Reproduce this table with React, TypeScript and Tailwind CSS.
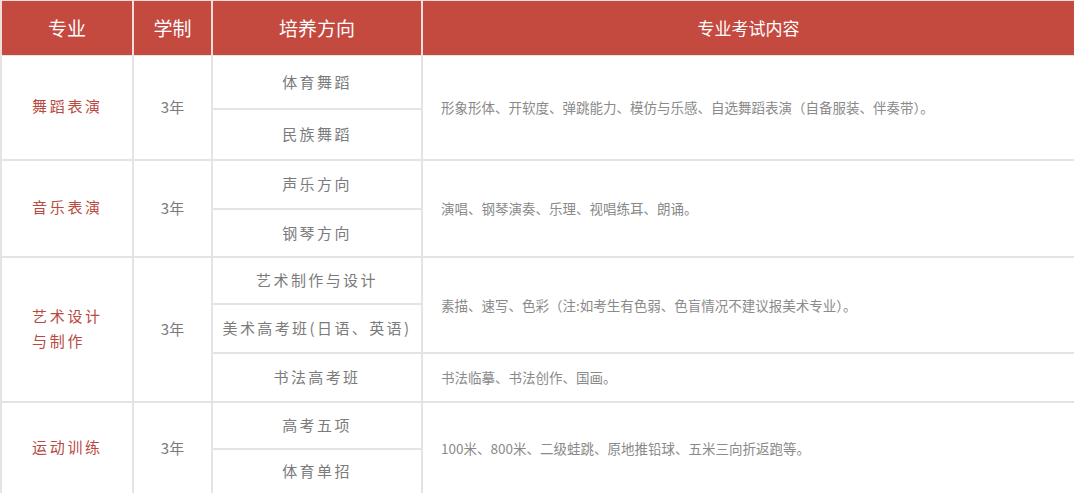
// Admission table: majors, duration, tracks and exam content.
const cjk = { fontFamily: '"Noto Sans CJK SC", "Noto Sans", sans-serif' };

const header = ["专业", "学制", "培养方向"];

type Cell = { text: string; row: string; col: string; kind: "major" | "years" | "track" | "exam" };

const cells: Cell[] = [
  { text: "舞蹈表演", row: "row-[1/3]", col: "col-[1]", kind: "major" },
  { text: "3年", row: "row-[1/3]", col: "col-[2]", kind: "years" },
  { text: "体育舞蹈", row: "row-[1]", col: "col-[3]", kind: "track" },
  { text: "民族舞蹈", row: "row-[2]", col: "col-[3]", kind: "track" },
  {
    text: "形象形体、开软度、弹跳能力、模仿与乐感、自选舞蹈表演（自备服装、伴奏带）。",
    row: "row-[1/3]",
    col: "col-[4]",
    kind: "exam",
  },
  { text: "音乐表演", row: "row-[3/5]", col: "col-[1]", kind: "major" },
  { text: "3年", row: "row-[3/5]", col: "col-[2]", kind: "years" },
  { text: "声乐方向", row: "row-[3]", col: "col-[3]", kind: "track" },
  { text: "钢琴方向", row: "row-[4]", col: "col-[3]", kind: "track" },
  { text: "演唱、钢琴演奏、乐理、视唱练耳、朗诵。", row: "row-[3/5]", col: "col-[4]", kind: "exam" },
  { text: "艺术设计\n与制作", row: "row-[5/8]", col: "col-[1]", kind: "major" },
  { text: "3年", row: "row-[5/8]", col: "col-[2]", kind: "years" },
  { text: "艺术制作与设计", row: "row-[5]", col: "col-[3]", kind: "track" },
  { text: "美术高考班(日语、英语)", row: "row-[6]", col: "col-[3]", kind: "track" },
  { text: "书法高考班", row: "row-[7]", col: "col-[3]", kind: "track" },
  {
    text: "素描、速写、色彩（注:如考生有色弱、色盲情况不建议报美术专业）。",
    row: "row-[5/7]",
    col: "col-[4]",
    kind: "exam",
  },
  { text: "书法临摹、书法创作、国画。", row: "row-[7]", col: "col-[4]", kind: "exam" },
  { text: "运动训练", row: "row-[8/10]", col: "col-[1]", kind: "major" },
  { text: "3年", row: "row-[8/10]", col: "col-[2]", kind: "years" },
  { text: "高考五项", row: "row-[8]", col: "col-[3]", kind: "track" },
  { text: "体育单招", row: "row-[9]", col: "col-[3]", kind: "track" },
  {
    text: "100米、800米、二级蛙跳、原地推铅球、五米三向折返跑等。",
    row: "row-[8/10]",
    col: "col-[4]",
    kind: "exam",
  },
];

function BodyCell({ c }: { c: Cell }) {
  if (c.kind === "exam") {
    return (
      <div className={`${c.row} ${c.col} flex items-center bg-white pl-[18px] text-[13.5px] text-[#8a8a8a]`}>
        {c.text}
      </div>
    );
  }
  if (c.kind === "major") {
    return (
      <div className={`${c.row} ${c.col} flex items-center justify-center bg-white pb-[4px]`}>
        <span className="w-[70px] whitespace-pre text-[15px] leading-[25px] tracking-[2.7px] text-[#b94a42]">
          {c.text}
        </span>
      </div>
    );
  }
  return (
    <div
      className={`${c.row} ${c.col} flex items-center justify-center bg-white text-[15px] text-[#7b7b7b] ${
        c.kind === "track" ? "tracking-[2.4px]" : ""
      }`}
    >
      {c.text}
    </div>
  );
}

export default function App() {
  return (
    <div className="h-[493px] w-[1074px] overflow-hidden bg-[#e4e4e4]" style={cjk}>
      <div className="grid h-[55px] grid-cols-[130px_77px_208px_1fr] gap-x-[2px] bg-[#f3dedc] pl-[2px] pt-[1px]">
        {header.map((h) => (
          <div key={h} className="flex items-center justify-center bg-[#c4493f] text-[19px] text-white">
            {h}
          </div>
        ))}
        <div className="flex items-center justify-center bg-[#c4493f] text-[17px] text-white">专业考试内容</div>
      </div>
      <div className="mt-[1px] grid grid-cols-[130px_77px_208px_1fr] grid-rows-[52px_49px_47px_46px_45px_47px_47px_45px_43px] gap-[2px] pl-[2px]">
        {cells.map((c, i) => (
          <BodyCell key={i} c={c} />
        ))}
      </div>
    </div>
  );
}
